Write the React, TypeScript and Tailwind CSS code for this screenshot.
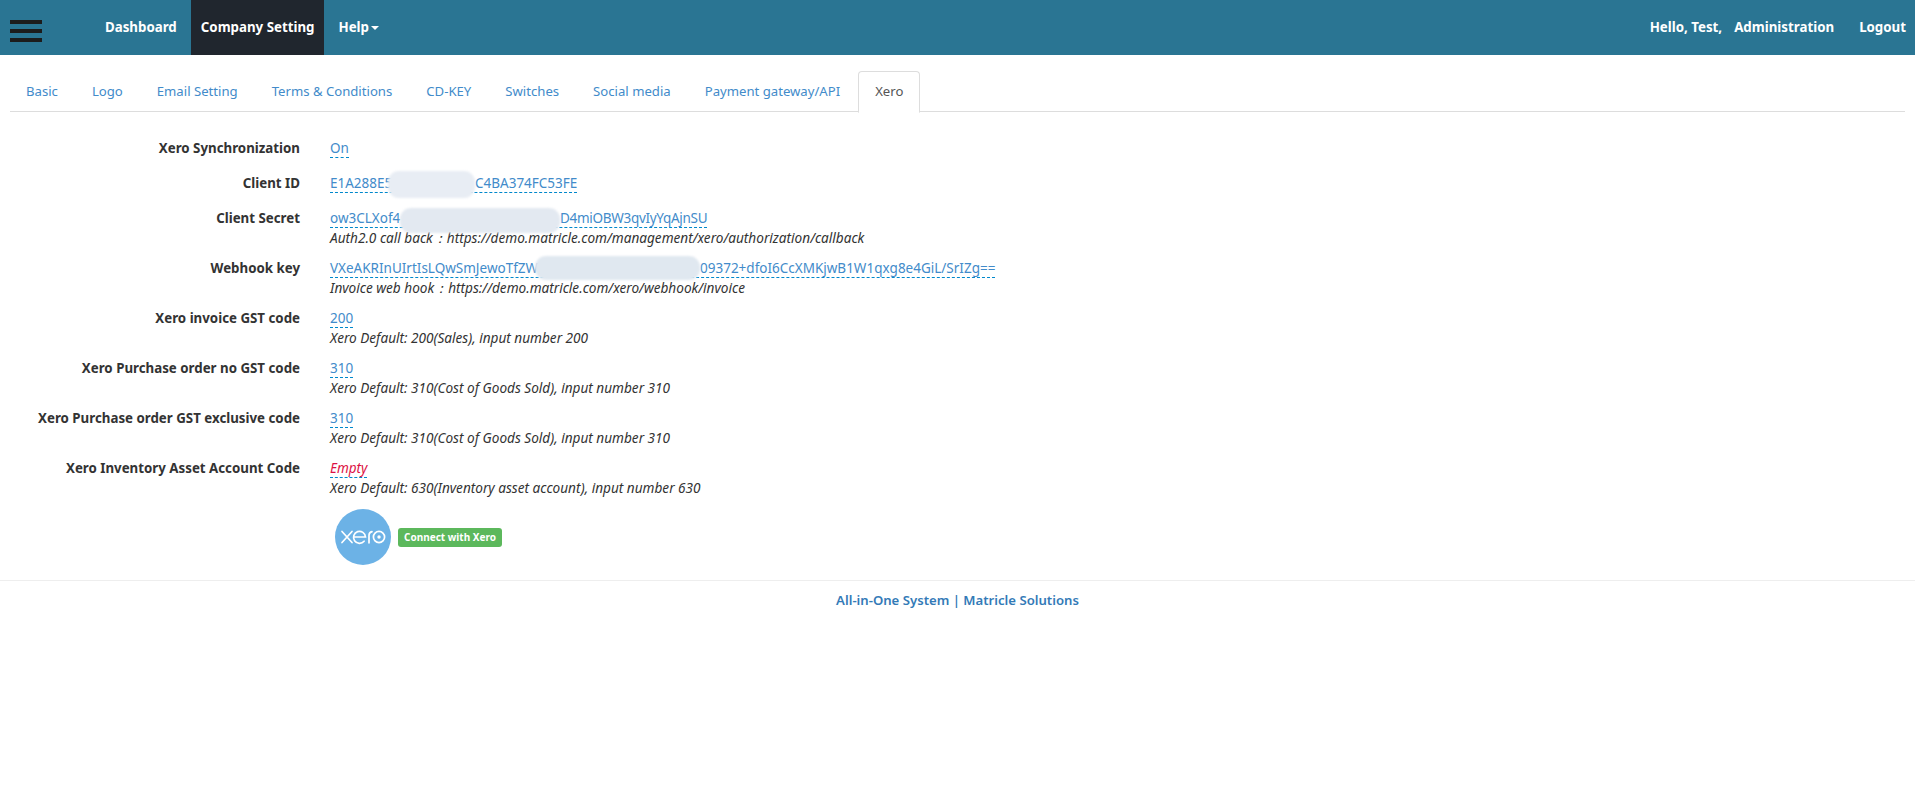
const font = "font-['Noto_Sans',sans-serif]";

type Masked = { prefix: string; prefixW: string; blobW: string; blob: string; suffix: string; suffixClass?: string };

function Val({ children, empty }: { children: React.ReactNode; empty?: boolean }) {
  return (
    <span className={`inline-flex h-[19px] leading-[18px] border-b border-dashed border-[#0088cc] whitespace-nowrap ${empty ? "text-[#dd1144] italic" : "text-[#428bca]"}`}>
      {children}
    </span>
  );
}

function Row({ label, value, masked, help, empty }: { label: string; value?: string; masked?: Masked; help?: string; empty?: boolean }) {
  return (
    <div className={`flex ${help ? "h-[50px]" : "h-[35px]"}`}>
      <div className="w-[300px] shrink-0 text-right font-bold text-[13.3px] leading-[20px] text-[#333333]">{label}</div>
      <div className="ml-[30px] text-[13.5px]">
        <Val empty={empty}>
          {masked ? (
            <>
              <span className={masked.prefixW}>{masked.prefix}</span>
              <span className={`relative ${masked.blobW}`}>
                <span className={`absolute left-0 right-0 rounded-[11px] blur-[1px] ${masked.blob}`} />
              </span>
              <span className={masked.suffixClass}>{masked.suffix}</span>
            </>
          ) : (
            value
          )}
        </Val>
        {help ? <div className="italic text-[13.6px] leading-[17px] text-[#333333] mt-px whitespace-pre">{help}</div> : null}
      </div>
    </div>
  );
}

function Tab({ children, active }: { children: React.ReactNode; active?: boolean }) {
  return active ? (
    <div className="h-[42px] -mb-px px-[16px] pt-[9px] leading-[20px] text-[#555555] bg-white border border-b-white border-[#dddddd] rounded-t-[4px]">{children}</div>
  ) : (
    <div className="h-[41px] px-[16px] mr-[2px] pt-[10px] leading-[20px] text-[#428bca]">{children}</div>
  );
}

export default function App() {
  return (
    <div className={`${font} text-[13.15px] min-h-[804px] bg-white`}>
      <header className="h-[55px] bg-[#2a7593] flex items-stretch text-white font-bold text-[13.3px]">
        <div className="w-[105px] shrink-0 pl-[10px] pt-[20px] flex flex-col gap-[5px]">
          <div className="w-[32px] h-[4px] bg-[#1c1c1c]" />
          <div className="w-[32px] h-[4px] bg-[#1c1c1c]" />
          <div className="w-[32px] h-[4px] bg-[#1c1c1c]" />
        </div>
        <div className="flex items-center mr-[14px]">Dashboard</div>
        <div className="flex items-center px-[10px] bg-[#20262e]">Company Setting</div>
        <div className="flex items-center ml-[14px]">
          Help
          <span className="ml-[2px] mt-[1px] border-x-[4px] border-x-transparent border-t-[4px] border-t-white" />
        </div>
        <div className="ml-auto flex items-center pr-[9px]">
          <span>Hello, Test,</span>
          <span className="ml-[12px]">Administration</span>
          <span className="ml-[25px]">Logout</span>
        </div>
      </header>

      <nav className="mx-[10px] mt-[16px] flex h-[41px] border-b border-[#dddddd]">
        <Tab>Basic</Tab>
        <Tab>Logo</Tab>
        <Tab>Email Setting</Tab>
        <Tab>Terms &amp; Conditions</Tab>
        <Tab>CD-KEY</Tab>
        <Tab>Switches</Tab>
        <Tab>Social media</Tab>
        <Tab>Payment gateway/API</Tab>
        <Tab active>Xero</Tab>
      </nav>

      <main className="pt-[26px]">
        <Row label="Xero Synchronization" value="On" />
        <Row
          label="Client ID"
          masked={{ prefix: "E1A288E5", prefixW: "w-[58px]", blobW: "w-[87px]", blob: "top-[-3px] h-[27px] bg-[#e8edf4]", suffix: "C4BA374FC53FE" }}
        />
        <Row
          label="Client Secret"
          masked={{ prefix: "ow3CLXof4", prefixW: "w-[70px]", blobW: "w-[160px]", blob: "top-[-1px] h-[25px] bg-[#e3e9f1]", suffix: "D4miOBW3qvIyYqAjnSU", suffixClass: "tracking-[-0.3px]" }}
          help="Auth2.0 call back：https://demo.matricle.com/management/xero/authorization/callback"
        />
        <Row
          label="Webhook key"
          masked={{ prefix: "VXeAKRInUIrtIsLQwSmJewoTfZW", prefixW: "w-[205px]", blobW: "w-[165px]", blob: "top-[-3px] h-[24px] bg-[#e0e8f0]", suffix: "09372+dfoI6CcXMKjwB1W1qxg8e4GiL/SrIZg==" }}
          help="Invoice web hook：https://demo.matricle.com/xero/webhook/invoice"
        />
        <Row label="Xero invoice GST code" value="200" help="Xero Default: 200(Sales), input number 200" />
        <Row label="Xero Purchase order no GST code" value="310" help="Xero Default: 310(Cost of Goods Sold), input number 310" />
        <Row label="Xero Purchase order GST exclusive code" value="310" help="Xero Default: 310(Cost of Goods Sold), input number 310" />
        <Row label="Xero Inventory Asset Account Code" value="Empty" empty help="Xero Default: 630(Inventory asset account), input number 630" />

        <div className="ml-[335px] mt-[1px] flex items-center gap-[7px]">
          <svg width="56" height="56" viewBox="0 0 56 56" aria-label="xero logo">
            <circle cx="28" cy="28" r="28" fill="#6cb2e6" />
            <g fill="none" stroke="#ffffff" strokeWidth="1.7" strokeLinecap="round">
              <path d="M7 22.5l10 11M17 22.5l-10 11" />
              <path d="M19 28h11.5a6 6 0 1 0-1.4 4.2" />
              <path d="M34 33.8v-7.5a4 4 0 0 1 3-3.7" />
              <circle cx="44" cy="28" r="5.6" />
            </g>
            <circle cx="44" cy="28" r="1.7" fill="#ffffff" />
          </svg>
          <span className="h-[19px] w-[104px] rounded-[3px] bg-[#5cb85c] text-white font-bold text-[10px] leading-[19px] text-center">Connect with Xero</span>
        </div>
      </main>

      <footer className="mt-[15px] border-t border-[#eeeeee] pt-[9px] text-center font-semibold leading-[20px] text-[#337ab7]">
        All-in-One System | Matricle Solutions
      </footer>
    </div>
  );
}
